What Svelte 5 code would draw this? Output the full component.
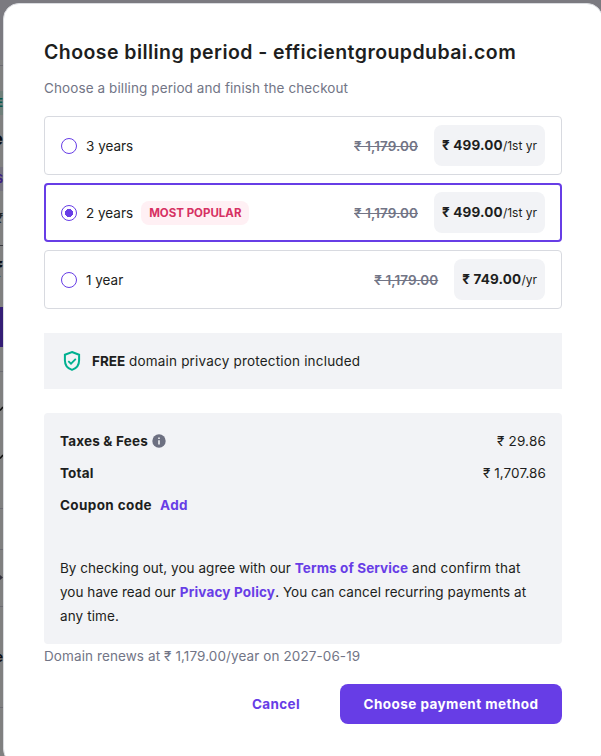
<script>
  const plans = [
    { id: 3, label: '3 years', old: '₹ 1,179.00', price: '₹ 499.00', unit: '/1st yr' },
    { id: 2, label: '2 years', old: '₹ 1,179.00', price: '₹ 499.00', unit: '/1st yr', popular: true },
    { id: 1, label: '1 year', old: '₹ 1,179.00', price: '₹ 749.00', unit: '/yr' }
  ];
  const dividers = [65, 371, 508, 549, 606, 707];
  let selected = $state(2);
</script>

<div class="screen">
  <div class="behind" aria-hidden="true">
    {#each dividers as y}
      <i class="divider" style="top:{y}px"></i>
    {/each}
    <i class="divider dark" style="top:245px"></i>
    <span class="block green">E</span>
    <span class="text name">e</span>
    <span class="block violet">S</span>
    <span class="text was">₹</span>
    <span class="text now">₹</span>
    <i class="block button"></i>
    <span class="text foot">e</span>
    <svg class="marks" width="3" height="756" viewBox="0 0 3 756" fill="none">
      <path d="M0 410.500l3-3.500M0 458.500l3-3.500" stroke="#111" stroke-width="1.500" />
      <path d="M0 575l3 2.500-3 2.500z" fill="#33323d" />
    </svg>
  </div>

  <div class="modal" role="dialog" aria-labelledby="title">
    <h1 id="title">Choose billing period - efficientgroupdubai.com</h1>
    <p class="sub">Choose a billing period and finish the checkout</p>

    <div class="plans">
      {#each plans as plan}
        <button class="plan" class:active={selected === plan.id} onclick={() => (selected = plan.id)}>
          <span class="radio"></span>
          <span class="label">{plan.label}</span>
          {#if plan.popular}<span class="badge">MOST POPULAR</span>{/if}
          <span class="old">{plan.old}</span>
          <span class="price"><b>{plan.price}</b><small>{plan.unit}</small></span>
        </button>
      {/each}
    </div>

    <div class="banner">
      <svg width="24" height="24" viewBox="0 0 24 24" fill="none" stroke="#00b090" stroke-width="2">
        <path d="M12 3 L19.100 5.700 V11.300 C19.100 15.900 16.200 19.600 12 20.900 C7.800 19.600 4.900 15.900 4.900 11.300 V5.700 Z" />
        <path d="M8.300 12.100 L11 14.700 L15.800 9.900" stroke-width="1.800" />
      </svg>
      <p><b>FREE</b> <span>domain privacy protection included</span></p>
    </div>

    <div class="summary">
      <div class="line">
        <b class="taxes">Taxes &amp; Fees</b>
        <svg class="info" width="14" height="14" viewBox="0 0 14 14">
          <circle cx="7" cy="7" r="6.700" fill="#6d7081" />
          <path d="M6.200 3.500h1.600v1.500H6.200zM6.200 6.200h1.600v4.200H6.200z" fill="#f2f3f6" />
        </svg>
        <span class="amount tax">₹ 29.86</span>
      </div>
      <div class="line">
        <b class="total">Total</b>
        <span class="amount">₹ 1,707.86</span>
      </div>
      <div class="line">
        <b class="coupon">Coupon code</b>
        <a class="add" href="#add">Add</a>
      </div>
      <p class="terms">
        By checking out, you agree with our <a class="tos" href="#terms">Terms of Service</a> <span class="confirm">and confirm that</span><br />
        you have read our <a class="privacy" href="#privacy">Privacy Policy</a>. You can cancel recurring payments at<br />
        <span class="anytime">any time.</span>
      </p>
    </div>
    <p class="renews">Domain renews at ₹ 1,179.00/year on 2027-06-19</p>

    <div class="actions">
      <button class="cancel">Cancel</button>
      <button class="primary">Choose payment method</button>
    </div>
  </div>
</div>

<style>
  :global(body) { overflow: hidden; }
  .screen {
    position: relative;
    box-sizing: border-box;
    width: 601px;
    height: 756px;
    padding: 3px 0 0 3px;
    overflow: hidden;
    background: linear-gradient(#7b7a80, #7b7a80) 0 0 / 100% 60px no-repeat, #808080;
    font: 400 13.5px/24px Inter, "Noto Sans", sans-serif;
    color: #1d1e20;
  }
  .behind { position: absolute; left: 0; top: 0; width: 3px; height: 756px; overflow: hidden; }
  .divider { position: absolute; left: 0; width: 3px; height: 1px; background: #6c6b72; }
  .dark { background: #3a3a40; }
  .block { position: absolute; right: 0; width: 20px; height: 24px; text-align: right; font-size: 11.5px; font-weight: 700; }
  .green { top: 91px; background: #6f7f7a; color: #06584c; }
  .violet { top: 167px; background: #75727f; color: #3d2185; }
  .button { top: 307px; height: 40px; background: #341d75; }
  .text { position: absolute; right: 0; color: #0d0f14; font-weight: 700; }
  .name { top: 127px; font-size: 18px; }
  .was { top: 206px; color: #222; font-weight: 400; }
  .now { top: 257px; font-size: 22px; }
  .foot { top: 645px; }
  .marks { position: absolute; left: 0; top: 0; }

  .modal {
    position: relative;
    box-sizing: border-box;
    width: 600px;
    height: 762px;
    padding: 32px 40px 40px;
    border: 1px solid #dadce0;
    border-radius: 16px;
    background: #fff;
  }
  h1, p { margin: 0; white-space: nowrap; }
  h1 { font-size: 19.5px; line-height: 32px; font-weight: 600; letter-spacing: 0.44px; }
  .sub { padding: 8px 0 16px; color: #727586; letter-spacing: 0.1px; }
  button { font: inherit; color: inherit; border: 0; margin: 0; padding: 0; background: none; cursor: pointer; }
  b, a { font-weight: 700; text-decoration: none; }
  a { color: #673de6; }

  .plans { display: flex; flex-direction: column; gap: 8px; }
  .plan {
    display: flex;
    align-items: center;
    box-sizing: border-box;
    height: 59px;
    padding: 0 16px;
    border: 1px solid #d8dae0;
    border-radius: 4px;
    background: #fff;
    white-space: nowrap;
  }
  .plan.active { border: 2px solid #673de6; padding: 0 15px; }
  .radio {
    box-sizing: border-box;
    width: 16px;
    height: 16px;
    margin-right: 9px;
    border: 1px solid #673de6;
    border-radius: 50%;
  }
  .active .radio { background: radial-gradient(circle, #673de6 3.800px, transparent 4.300px); }
  .badge {
    margin-left: 8px;
    padding: 0 8px;
    border-radius: 8px;
    background: #fff0f4;
    color: #d63163;
    font-size: 11.5px;
    font-weight: 700;
  }
  .old { margin-left: auto; margin-right: 16px; font-weight: 600; letter-spacing: 0.08px; color: #727586; text-decoration: line-through; }
  .price {
    display: flex;
    align-items: center;
    height: 41px;
    padding: 0 8px;
    border-radius: 8px;
    background: #f2f3f6;
  }
  .price b { letter-spacing: 0.17px; line-height: 24px; padding-bottom: 2px; }
  .price small { font-size: 12px; }

  .banner {
    display: flex;
    align-items: center;
    gap: 8px;
    height: 56px;
    margin: 24px 0;
    padding: 0 16px;
    box-sizing: border-box;
    background: #f2f3f6;
  }
  .banner span { letter-spacing: 0.19px; }

  .summary { padding: 12px 16px 16px; border-radius: 4px; background: #f2f3f6; }
  .line { display: flex; align-items: center; height: 32px; white-space: nowrap; }
  .taxes { letter-spacing: 0.19px; }
  .info { margin-left: 4px; }
  .total { letter-spacing: 0.15px; }
  .coupon { letter-spacing: 0.38px; }
  .add { margin-left: 8px; letter-spacing: 0.4px; }
  .amount { margin-left: auto; letter-spacing: 0.08px; }
  .tax { letter-spacing: 0.19px; }
  .terms { padding-top: 35px; letter-spacing: 0.04px; }
  .tos { letter-spacing: 0.1px; }
  .confirm { letter-spacing: 0.22px; }
  .privacy { letter-spacing: 0.18px; }
  .anytime { letter-spacing: 0.1px; }
  .renews { color: #727586; letter-spacing: 0.1px; }

  .actions { display: flex; justify-content: flex-end; margin-top: 16px; }
  .actions button { height: 40px; font-weight: 700; white-space: nowrap; }
  .cancel { width: 128px; color: #673de6; letter-spacing: 0.35px; }
  .primary { width: 222px; border-radius: 8px; background: #673de6; color: #fff; letter-spacing: 0.45px; }
</style>
